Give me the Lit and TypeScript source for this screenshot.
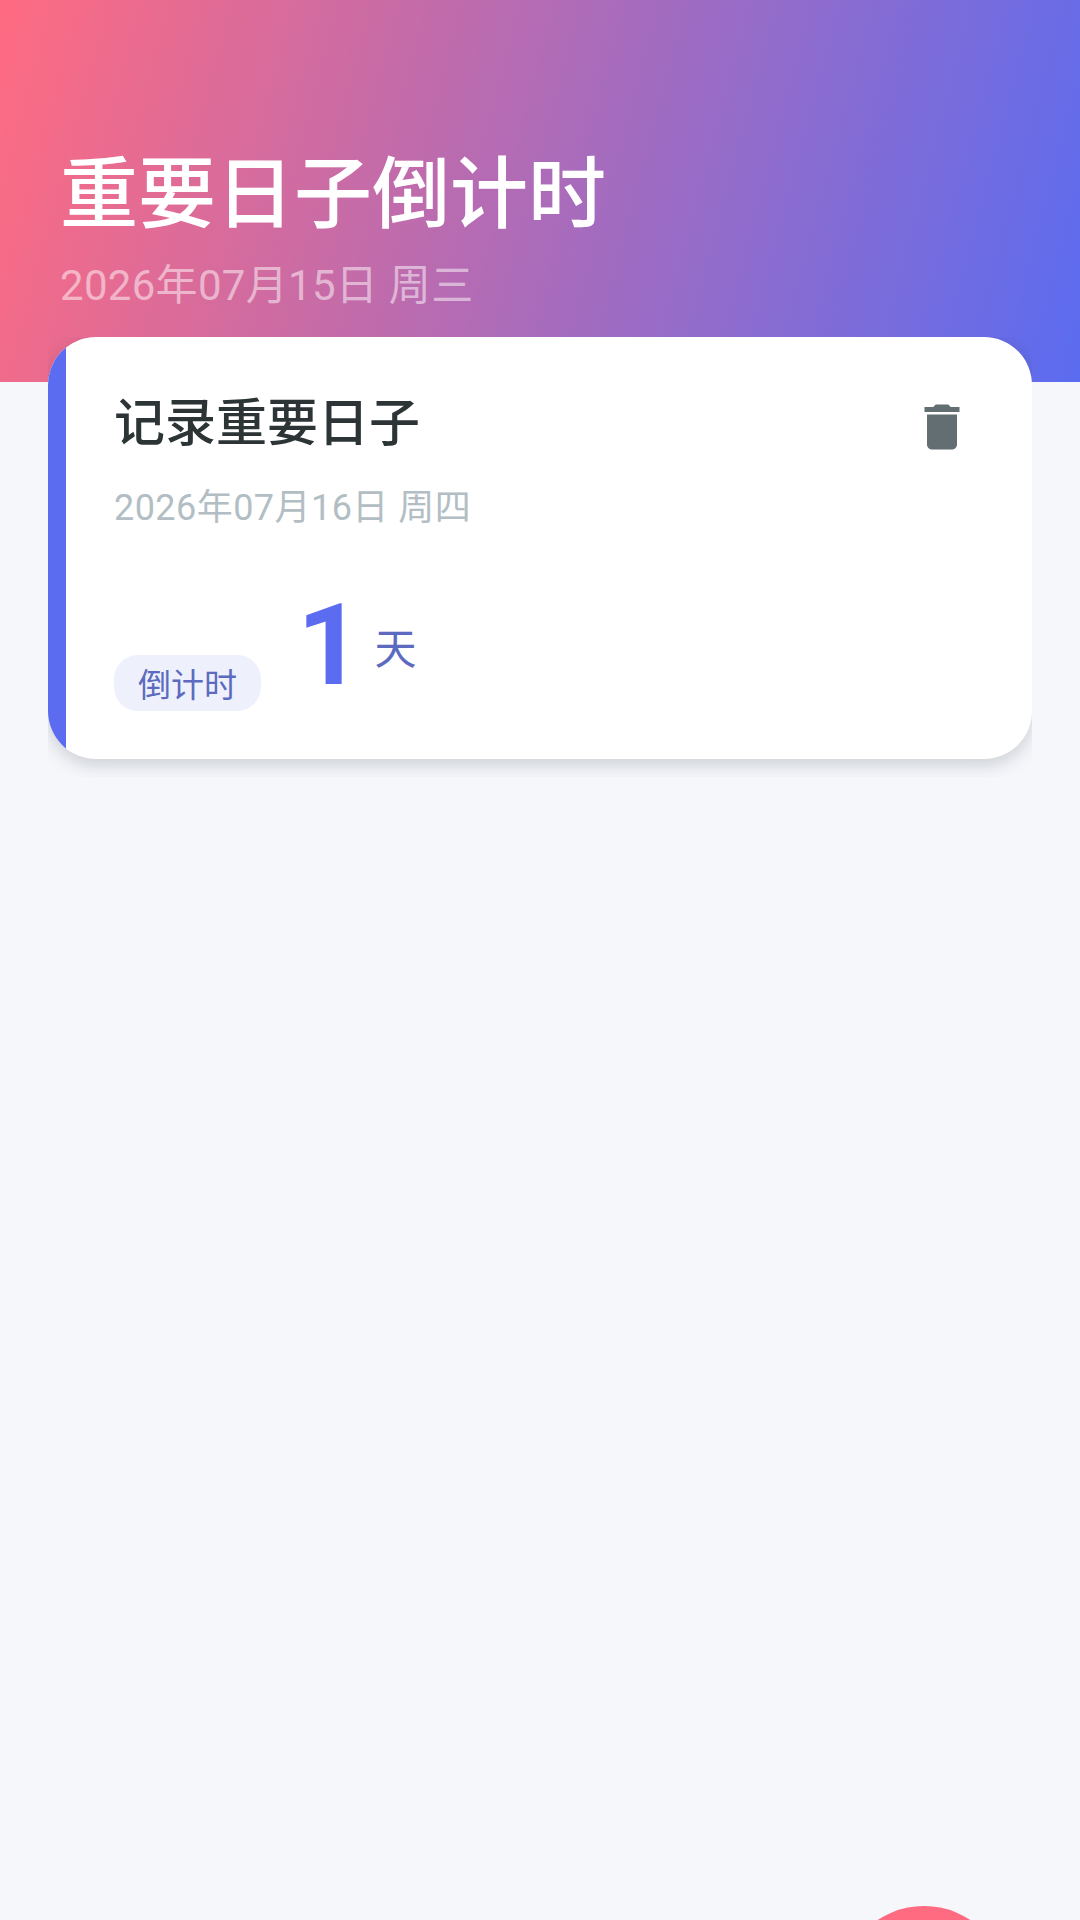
import { LitElement, html, css } from "lit";
import { customElement } from "lit/decorators.js";

@customElement("app-root")
export class AppRoot extends LitElement {
  static styles = css`
    :host {
      display: block;
      position: relative;
      width: 1080px;
      height: 1920px;
      overflow: hidden;
      background: #f5f7fb;
      font-family: Roboto, "Noto Sans CJK SC", sans-serif;
    }
    .header {
      box-sizing: border-box;
      height: 382px;
      padding: 150px 48px 0 60px;
      background: linear-gradient(105deg, #ff6b81 0%, #5b6cf0 100%);
    }
    .title {
      font-size: 78px;
      line-height: 92px;
      font-weight: 500;
      color: #fff;
    }
    .today {
      margin-top: 19px;
      font-size: 42px;
      line-height: 50px;
      letter-spacing: 0.3px;
      color: rgba(255, 255, 255, 0.5);
    }
    .list {
      margin: -45px 48px 0;
      padding-bottom: 18px;
      overflow: hidden;
    }
    .card {
      box-sizing: border-box;
      height: 422px;
      display: flex;
      overflow: hidden;
      border-radius: 48px;
      background: #fff;
      box-shadow: 0 6px 18px rgba(45, 52, 54, 0.2);
    }
    .stripe {
      flex: none;
      width: 18px;
      background: #5b6cf0;
    }
    .body {
      flex: 1;
      display: flex;
      flex-direction: column;
      padding: 57px 60px 48px 48px;
    }
    .top {
      display: flex;
      justify-content: space-between;
      align-items: flex-start;
    }
    .name {
      font-size: 51px;
      line-height: 60px;
      font-weight: 500;
      color: #2d3436;
    }
    .icon {
      width: 60px;
      height: 60px;
      margin-top: 3px;
      fill: #636e72;
    }
    .date {
      margin-top: 29px;
      font-size: 36px;
      line-height: 44px;
      letter-spacing: 0.45px;
      color: #b2bec3;
    }
    .bottom {
      margin-top: auto;
      display: flex;
      align-items: flex-end;
    }
    .tag {
      box-sizing: border-box;
      height: 56px;
      padding: 0 24px;
      display: flex;
      align-items: center;
      border-radius: 24px;
      background: #eef0fc;
      color: #5c6bc0;
      font-size: 33px;
    }
    .count {
      margin-left: 36px;
      display: flex;
      align-items: flex-start;
      transform: translateY(-9px);
    }
    .num {
      font-size: 114px;
      line-height: 114px;
      font-weight: 700;
      color: #5b6cf0;
    }
    .unit {
      margin: 37px 0 0 12px;
      font-size: 42px;
      line-height: 50px;
      color: #5c6bc0;
    }
    .fab {
      position: absolute;
      left: 840px;
      top: 1906px;
      width: 168px;
      height: 168px;
      border-radius: 50%;
      background: #ff6b81;
    }
  `;

  render() {
    return html`
      <div class="header">
        <div class="title">重要日子倒计时</div>
        <div class="today">2026年07月15日 周三</div>
      </div>
      <div class="list">
        <div class="card">
          <div class="stripe"></div>
          <div class="body">
            <div class="top">
              <div class="name">记录重要日子</div>
              <svg class="icon" viewBox="0 0 24 24">
                <path d="M6 19c0 1.1.9 2 2 2h8c1.1 0 2-.9 2-2V7H6v12zM19 4h-3.5l-1-1h-5l-1 1H5v2h14V4z" />
              </svg>
            </div>
            <div class="date">2026年07月16日 周四</div>
            <div class="bottom">
              <div class="tag">倒计时</div>
              <div class="count">
                <span class="num">1</span>
                <span class="unit">天</span>
              </div>
            </div>
          </div>
        </div>
      </div>
      <div class="fab"></div>
    `;
  }
}
